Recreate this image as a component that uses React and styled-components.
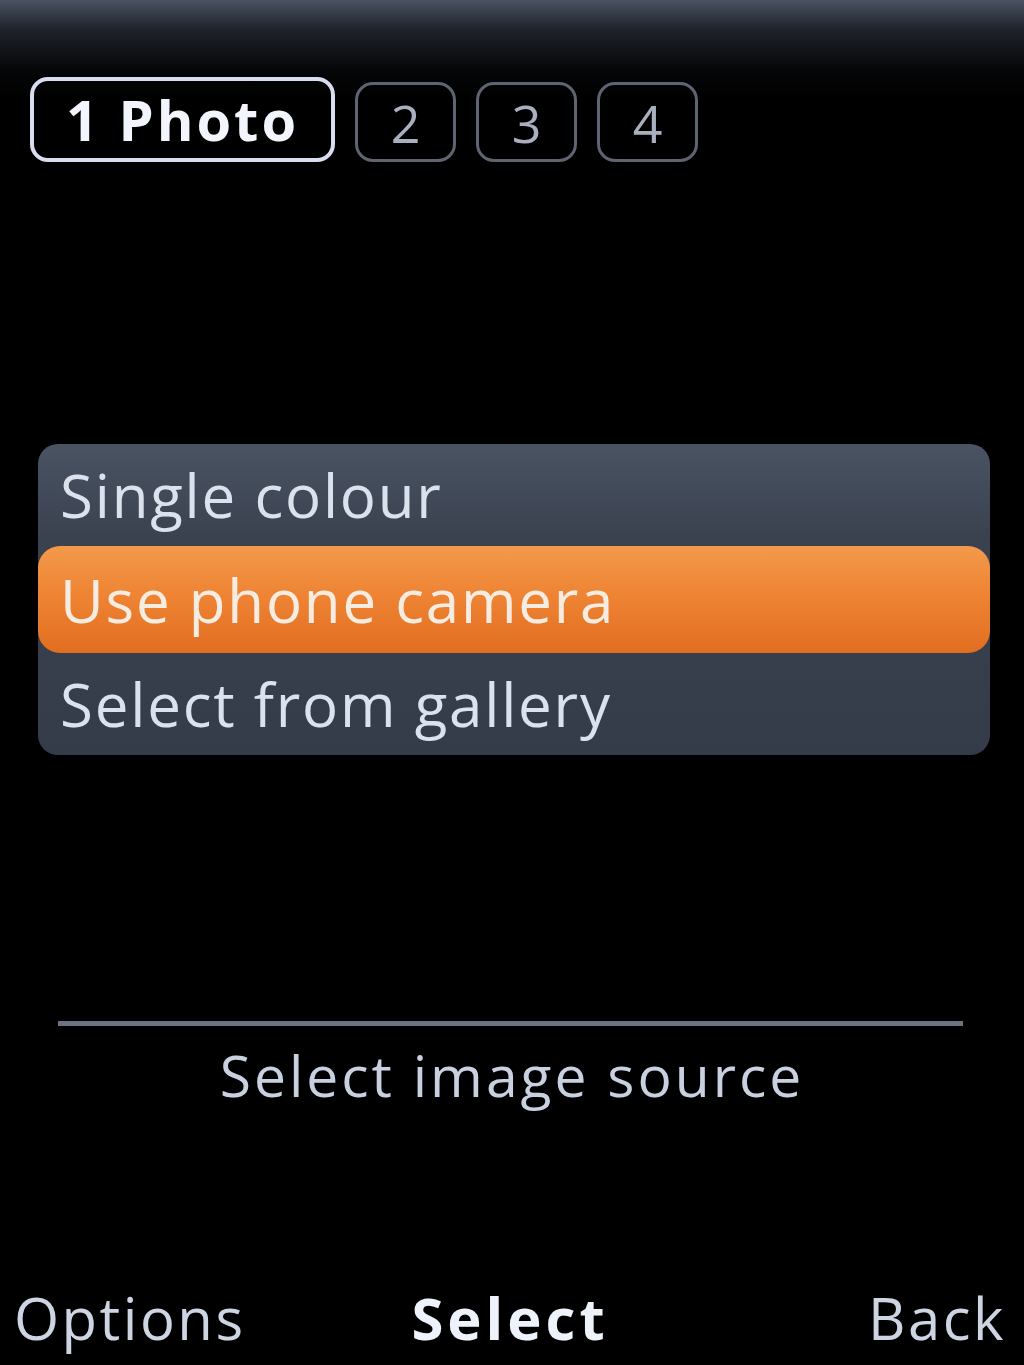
import React from 'react';
import styled, { createGlobalStyle } from 'styled-components';

const GlobalStyle = createGlobalStyle`
  html, body {
    margin: 0;
    padding: 0;
    background: #000;
  }
  * {
    box-sizing: border-box;
  }
`;

const Screen = styled.div`
  width: 1024px;
  height: 1365px;
  display: flex;
  flex-direction: column;
  background: linear-gradient(180deg, #4a5262 0px, #1e222a 30px, #050608 70px, #000 100px);
  font-family: 'Open Sans', 'DejaVu Sans', sans-serif;
  color: #dfe5f0;
  overflow: hidden;
`;

const TabBar = styled.div`
  display: flex;
  align-items: center;
  gap: 20px;
  padding: 76px 0 0 30px;
`;

const Tab = styled.div`
  height: ${(p) => (p.active ? '85px' : '80px')};
  width: ${(p) => (p.active ? '305px' : '101px')};
  display: flex;
  align-items: center;
  justify-content: center;
  border: ${(p) => (p.active ? '4px solid #d8def0' : '3px solid #5f6472')};
  border-radius: 18px;
  font-size: ${(p) => (p.active ? '56px' : '52px')};
  font-weight: ${(p) => (p.active ? 700 : 400)};
  color: ${(p) => (p.active ? '#f2f5fb' : '#a9afbf')};
  letter-spacing: ${(p) => (p.active ? '3px' : '0')};
  margin-top: ${(p) => (p.active ? '0' : '6px')};
`;

const Menu = styled.div`
  margin: 282px 34px 0 38px;
  border-radius: 20px;
  background: linear-gradient(180deg, #4a5362 0%, #3a4250 30%, #343c49 100%);
  display: flex;
  flex-direction: column;
`;

const Row = styled.div`
  height: ${(p) => (p.selected ? '107px' : '102px')};
  display: flex;
  align-items: center;
  padding-left: 22px;
  font-size: 60px;
  letter-spacing: 1.8px;
  border-radius: ${(p) => (p.selected ? '22px' : '0')};
  color: ${(p) => (p.selected ? '#f7ece2' : '#dbe2ee')};
  background: ${(p) =>
    p.selected
      ? 'linear-gradient(180deg, #f29a4a 0%, #ee8434 45%, #e26e20 100%)'
      : 'transparent'};
`;

const Divider = styled.div`
  margin: 266px 61px 0 58px;
  height: 5px;
  background: #6b7282;
`;

const Caption = styled.div`
  margin-top: 10px;
  text-align: center;
  font-size: 57px;
  letter-spacing: 3px;
  color: #c9d1e1;
`;

const SoftKeys = styled.div`
  margin-top: auto;
  padding: 0 18px 8px 14px;
  display: flex;
  justify-content: space-between;
  align-items: flex-end;
`;

const SoftKey = styled.div`
  font-size: 58px;
  letter-spacing: ${(p) => (p.bold ? '4px' : '2.5px')};
  font-weight: ${(p) => (p.bold ? 700 : 400)};
  color: ${(p) => (p.bold ? '#eef2fa' : '#cdd4e2')};
  width: ${(p) => p.w}px;
  text-align: ${(p) => p.align || 'left'};
`;

const options = ['Single colour', 'Use phone camera', 'Select from gallery'];

export default function App() {
  return (
    <>
      <GlobalStyle />
      <Screen>
        <TabBar>
          <Tab active>1 Photo</Tab>
          <Tab>2</Tab>
          <Tab>3</Tab>
          <Tab>4</Tab>
        </TabBar>
        <Menu>
          {options.map((o, i) => (
            <Row key={o} selected={i === 1}>
              {o}
            </Row>
          ))}
        </Menu>
        <Divider />
        <Caption>Select image source</Caption>
        <SoftKeys>
          <SoftKey w={300}>Options</SoftKey>
          <SoftKey bold w={300} align="center">Select</SoftKey>
          <SoftKey w={300} align="right">Back</SoftKey>
        </SoftKeys>
      </Screen>
    </>
  );
}
